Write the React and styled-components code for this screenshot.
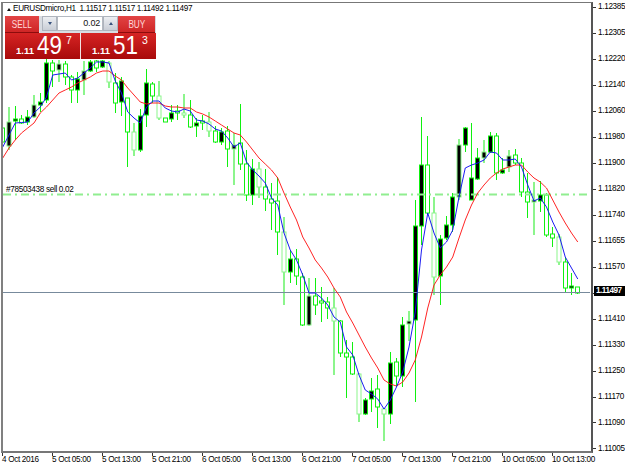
import React from "react";
import styled, { createGlobalStyle } from "styled-components";

const GlobalStyle = createGlobalStyle`
  html, body { margin: 0; padding: 0; background: #fff; }
  body { font-family: "Liberation Sans", Arial, sans-serif; }
`;

// bar index: [high, bodyTop, bodyBottom, low, bear]
const bars = [
  [123, 128, 142, 157, 0], [107, 122, 146, 150, 1], [106, 119, 121, 140, 1], [115, 119, 123, 124, 0],
  [110, 117, 122, 125, 1], [95, 105, 117, 118, 1], [93, 102, 105, 112, 1], [55, 63, 100, 103, 1],
  [60, 63, 71, 87, 0], [60, 64, 70, 82, 1], [61, 64, 77, 85, 0], [75, 77, 90, 103, 0],
  [72, 79, 90, 103, 1], [61, 71, 80, 95, 1], [60, 62, 71, 72, 1], [60, 61, 68, 72, 0],
  [60, 61, 67, 68, 1], [61, 63, 82, 88, 0], [73, 83, 103, 113, 0], [77, 81, 102, 116, 1],
  [98, 98, 132, 167, 0], [123, 132, 150, 156, 0], [109, 116, 150, 152, 1], [69, 83, 115, 127, 1],
  [82, 84, 96, 103, 0], [81, 96, 118, 120, 0], [118, 118, 122, 122, 0], [105, 113, 119, 122, 1],
  [105, 111, 113, 120, 0], [94, 113, 115, 118, 0], [100, 115, 127, 128, 0], [118, 123, 126, 137, 1],
  [115, 121, 123, 130, 0], [112, 122, 131, 137, 0], [126, 131, 142, 143, 0], [128, 132, 142, 145, 1],
  [126, 131, 149, 167, 0], [133, 145, 149, 185, 1], [104, 143, 164, 170, 0], [150, 164, 195, 201, 0],
  [159, 169, 195, 205, 1], [162, 169, 187, 198, 0], [169, 187, 199, 211, 0], [183, 199, 203, 230, 0],
  [177, 201, 232, 255, 0], [217, 232, 272, 305, 0], [250, 259, 272, 283, 1], [249, 259, 276, 285, 0],
  [273, 277, 325, 326, 0], [278, 296, 325, 326, 1], [278, 296, 305, 315, 0], [287, 301, 303, 322, 0],
  [297, 302, 308, 319, 0], [288, 308, 321, 375, 0], [320, 321, 353, 357, 0], [340, 353, 357, 398, 0],
  [342, 357, 374, 375, 0], [373, 374, 414, 422, 0], [398, 400, 414, 415, 1], [378, 391, 399, 412, 1],
  [375, 389, 407, 428, 0], [408, 409, 414, 441, 0], [352, 363, 414, 424, 1], [358, 362, 376, 387, 0],
  [317, 325, 376, 387, 1], [311, 321, 324, 341, 1], [200, 226, 320, 402, 1], [117, 165, 226, 245, 1],
  [136, 165, 213, 214, 0], [197, 213, 277, 295, 0], [235, 239, 276, 305, 1], [216, 225, 238, 240, 1],
  [193, 197, 225, 232, 1], [139, 145, 197, 200, 1], [127, 128, 145, 152, 1], [123, 178, 200, 200, 1],
  [148, 158, 179, 180, 1], [140, 152, 158, 163, 1], [132, 136, 152, 153, 1], [133, 136, 173, 180, 0],
  [158, 170, 173, 174, 1], [150, 156, 167, 172, 1], [149, 155, 163, 165, 0], [158, 163, 192, 197, 0],
  [173, 192, 202, 218, 0], [182, 200, 202, 235, 1], [181, 195, 201, 212, 1], [193, 195, 235, 237, 0],
  [227, 234, 238, 247, 0], [234, 237, 262, 265, 0], [257, 262, 288, 293, 0], [273, 286, 288, 295, 1],
  [287, 287, 293, 294, 0],
];

const blue = [
  147, 135, 123, 122.5, 122, 113, 107, 97, 75, 74, 73, 80, 78, 73, 68, 62, 62, 63, 81, 93,
  112, 118, 123, 107, 101, 101, 108, 111, 112, 109, 111, 120, 121, 124, 129, 131, 138, 147, 143, 162,
  170, 176, 183, 198, 205, 233, 250, 260, 275, 293, 293, 298, 305, 317, 322, 347, 355, 375, 390, 394,
  399, 409, 400, 387, 372, 347, 312, 250, 213, 233, 248, 242, 230, 197, 168, 165, 163, 160, 152, 153,
  160, 160, 159, 167, 185, 201, 198, 207, 222, 235, 257, 268, 279,
];

const red = [
  158, 148, 140, 133, 128, 123, 113, 107, 100, 93, 90, 87, 83, 80, 77, 73, 71, 71, 76, 80,
  88, 95, 102, 104, 103, 103, 106, 107, 107, 108, 108, 112, 114, 117, 121, 125, 129, 133, 135, 142,
  150, 158, 164, 170, 178, 193, 207, 220, 237, 248, 260, 268, 277, 288, 297, 312, 323, 335, 347, 358,
  368, 380, 384, 386, 382, 373, 360, 337, 308, 285, 275, 267, 257, 238, 220, 205, 193, 185, 178, 173,
  169, 167, 165, 165, 172, 178, 182, 188, 200, 212, 223, 233, 242,
];

const prices = [
  "1.12385", "1.12305", "1.12220", "1.12140", "1.12060", "1.11980", "1.11900", "1.11820", "1.11740",
  "1.11655", "1.11570", "1.11497", "1.11410", "1.11330", "1.11250", "1.11170", "1.11090", "1.11005",
];

const times = [
  "4 Oct 2016", "5 Oct 05:00", "5 Oct 13:00", "5 Oct 21:00", "6 Oct 05:00", "6 Oct 13:00",
  "6 Oct 21:00", "7 Oct 05:00", "7 Oct 13:00", "7 Oct 21:00", "10 Oct 05:00", "10 Oct 13:00",
];

const barX = (i) => 2.75 + 6.25 * i;
const points = (ys) => ys.map((y, i) => `${barX(i).toFixed(2)},${y}`).join(" ");

const Page = styled.div`
  width: 625px;
  height: 469px;
  background: #fff;
  overflow: hidden;
  padding-top: 2px;
  box-sizing: border-box;
`;

const Top = styled.div`
  display: flex;
  height: 451px;
`;

const ChartPane = styled.div`
  position: relative;
  width: 588px;
  height: 448px;
  margin-left: 1px;
  border: 1px solid #777;
  border-left: 2px solid #808080;
  border-bottom: 2px solid #777;
  border-right: 2px solid #555;
  flex: none;
`;

const ChartSvg = styled.svg`
  display: block;
  width: 588px;
  height: 448px;
`;

const SymbolBar = styled.div`
  position: absolute;
  left: 4px;
  top: 0;
  display: flex;
  align-items: center;
  gap: 2px;
  font-size: 8.2px;
  letter-spacing: -0.33px;
  line-height: 12px;
  color: #000;
  white-space: pre;
`;

const Caret = styled.span`
  width: 0;
  height: 0;
  border-left: 2.5px solid transparent;
  border-right: 2.5px solid transparent;
  border-bottom: 3px solid #111;
`;

const OrderLabel = styled.div`
  position: absolute;
  left: 3px;
  top: 181px;
  font-size: 8.2px;
  letter-spacing: -0.33px;
  line-height: 11px;
  color: #000;
`;

const TradePanel = styled.div`
  position: absolute;
  left: 2px;
  top: 13px;
  width: 151px;
  display: flex;
  flex-direction: column;
`;

const ControlRow = styled.div`
  display: flex;
  height: 17px;
  background: #d8dce2;
`;

const TradeButton = styled.div`
  width: ${(p) => p.$width}px;
  margin-right: ${(p) => p.$gap}px;
  flex: none;
  display: flex;
  align-items: center;
  justify-content: center;
  color: #ffd8d8;
  background: linear-gradient(#e24444, #cf2626);
  border-bottom: 1px solid #8c0c0c;
  box-sizing: border-box;
`;

const ButtonLabel = styled.span`
  display: inline-block;
  font-size: 10.5px;
  transform: scaleX(0.78);
`;

const StepButton = styled.div`
  width: 15px;
  height: 15px;
  flex: none;
  display: flex;
  align-items: center;
  justify-content: center;
  background: linear-gradient(#eceef2, #c9ced6);
  border: 1px solid #aeb4bd;
  box-sizing: border-box;
`;

const StepArrow = styled.span`
  width: 0;
  height: 0;
  border-left: 2.5px solid transparent;
  border-right: 2.5px solid transparent;
  ${(p) =>
    p.$up ? "border-bottom: 3px solid #39527d;" : "border-top: 3px solid #39527d;"}
`;

const LotField = styled.div`
  width: 46px;
  height: 15px;
  flex: none;
  background: #fff;
  border: 1px solid #b4b9c1;
  box-sizing: border-box;
  font-size: 9px;
  letter-spacing: -0.2px;
  line-height: 13px;
  text-align: right;
  padding-right: 2px;
  color: #111;
`;

const QuoteRow = styled.div`
  display: flex;
  height: 26px;
  gap: 1px;
  background: #f0e4e4;
`;

const Quote = styled.div`
  flex: 1;
  display: flex;
  align-items: flex-end;
  padding-left: 11px;
  padding-bottom: 3px;
  box-sizing: border-box;
  color: #fff;
  background: linear-gradient(#d62424, #a80a0a);
`;

const QuoteSmall = styled.span`
  font-size: 9.5px;
  font-weight: 700;
  line-height: 11px;
  margin-right: 3px;
`;

const QuoteBig = styled.span`
  display: inline-block;
  font-size: 26px;
  line-height: 21px;
  transform: scaleX(0.86);
  transform-origin: left center;
  margin-right: -4px;
`;

const QuoteExp = styled.span`
  font-size: 10.5px;
  line-height: 12px;
  align-self: flex-start;
  margin-left: 4px;
  margin-top: 1px;
`;

const PriceAxis = styled.div`
  display: flex;
  flex-direction: column;
  margin-top: -8px;
`;

const PriceRow = styled.div`
  position: relative;
  display: flex;
  align-items: center;
  height: 25.98px;
  padding-left: 5px;
  font-size: 8.2px;
  letter-spacing: -0.33px;
  color: #000;
  flex: none;

  &::before {
    content: "";
    position: absolute;
    left: 0;
    top: 50%;
    width: 3px;
    height: 1px;
    background: #333;
  }
`;

const CurrentPrice = styled.span`
  position: absolute;
  left: 1px;
  top: 6px;
  width: 29px;
  height: 10px;
  line-height: 10px;
  padding-left: 2px;
  background: #000;
  color: #fff;
  font-weight: 700;
  letter-spacing: -0.5px;
  z-index: 1;
`;

const TimeAxis = styled.div`
  display: grid;
  grid-template-columns: repeat(12, 50px);
  margin-left: 2px;
`;

const TimeCell = styled.div`
  font-size: 8.2px;
  letter-spacing: -0.33px;
  line-height: 8px;
  color: #000;
  white-space: nowrap;

  &::before {
    content: "";
    display: block;
    width: 1px;
    height: 3px;
    background: #333;
  }
`;

function Chart() {
  return (
    <ChartSvg viewBox="3 3 588 448">
      {bars.map(([high, top, bottom, low, bear], i) => {
        const soft = i % 4 === 1;
        const cx = soft ? Math.round(barX(i)) : Math.floor(barX(i)) + 0.5;
        const stroke = soft ? "#8cf58c" : "#10f010";
        return (
          <g key={i}>
            <line
              x1={cx}
              x2={cx}
              y1={high}
              y2={low}
              stroke={stroke}
              strokeWidth={soft ? 2 : 1}
            />
            <rect
              x={cx - 2}
              y={top}
              width={4}
              height={bottom - top}
              fill={bear ? "#000" : "#fff"}
              stroke={stroke}
              strokeWidth={1}
            />
          </g>
        );
      })}
      <line x1="3" x2="590" y1="194.5" y2="194.5" stroke="#90ee90" strokeWidth="2" strokeDasharray="8 4 2 4" />
      <line x1="3" x2="590" y1="292.5" y2="292.5" stroke="#778a9c" strokeWidth="1" />
      <polyline points={points(red)} fill="none" stroke="#ff1818" strokeWidth="0.95" />
      <polyline points={points(blue)} fill="none" stroke="#1010f0" strokeWidth="0.95" />
    </ChartSvg>
  );
}

function Panel() {
  return (
    <TradePanel>
      <ControlRow>
        <TradeButton $width={34} $gap={3}>
          <ButtonLabel>SELL</ButtonLabel>
        </TradeButton>
        <StepButton>
          <StepArrow />
        </StepButton>
        <LotField>0.02</LotField>
        <StepButton>
          <StepArrow $up />
        </StepButton>
        <TradeButton $width={37} $gap={0}>
          <ButtonLabel>BUY</ButtonLabel>
        </TradeButton>
      </ControlRow>
      <QuoteRow>
        <Quote>
          <QuoteSmall>1.11</QuoteSmall>
          <QuoteBig>49</QuoteBig>
          <QuoteExp>7</QuoteExp>
        </Quote>
        <Quote>
          <QuoteSmall>1.11</QuoteSmall>
          <QuoteBig>51</QuoteBig>
          <QuoteExp>3</QuoteExp>
        </Quote>
      </QuoteRow>
    </TradePanel>
  );
}

export default function App() {
  return (
    <Page>
      <GlobalStyle />
      <Top>
        <ChartPane>
          <Chart />
          <SymbolBar>
            <Caret />
            {"EURUSDmicro,H1  1.11517 1.11517 1.11492 1.11497"}
          </SymbolBar>
          <OrderLabel>#78503438 sell 0.02</OrderLabel>
          <Panel />
        </ChartPane>
        <PriceAxis>
          {prices.map((price) =>
            price === "1.11497" ? (
              <PriceRow key={price}>
                <CurrentPrice>{price}</CurrentPrice>
              </PriceRow>
            ) : (
              <PriceRow key={price}>{price}</PriceRow>
            )
          )}
        </PriceAxis>
      </Top>
      <TimeAxis>
        {times.map((t) => (
          <TimeCell key={t}>{t}</TimeCell>
        ))}
      </TimeAxis>
    </Page>
  );
}
